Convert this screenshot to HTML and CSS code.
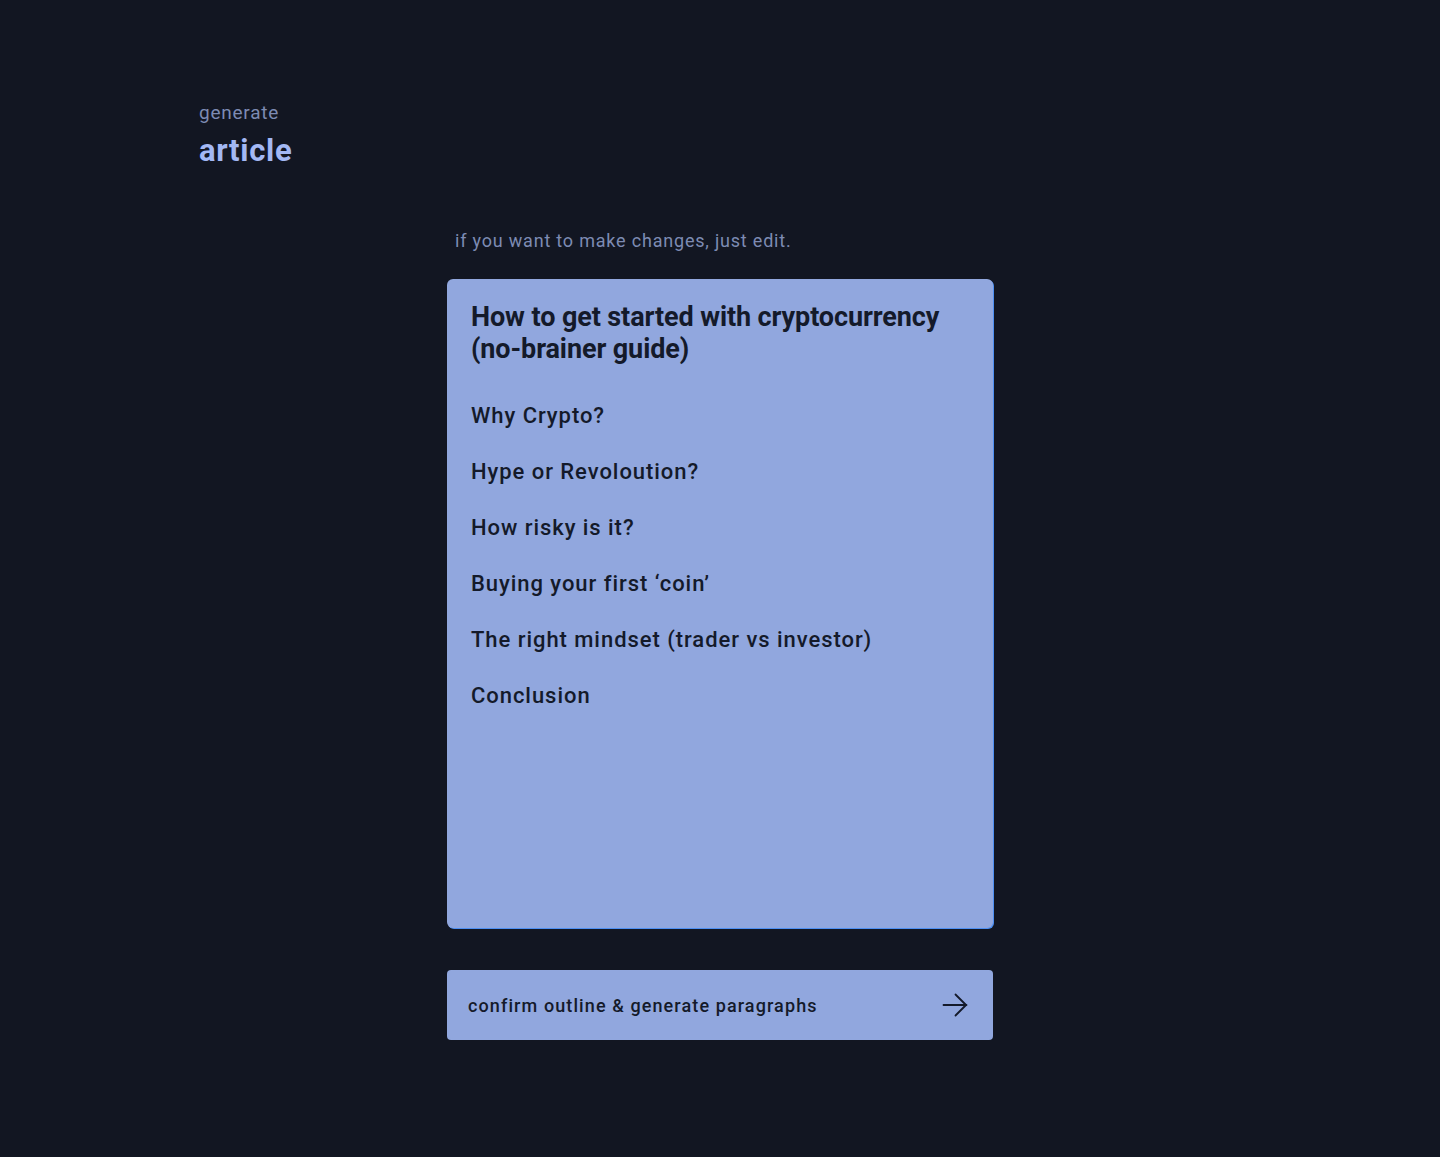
FILE: index.html
```html
<!DOCTYPE html>
<html lang="en">
<head>
<meta charset="utf-8">
<title>generate article</title>
<link rel="stylesheet" href="styles.css">
</head>
<body>
<div class="page">
  <header class="head">
    <div class="kicker">generate</div>
    <h1 class="title">article</h1>
  </header>
  <main class="main">
    <p class="hint">if you want to make changes, just edit.</p>
    <div class="outline" contenteditable="true">
      <h2 class="outline-title">How to get started with cryptocurrency (no-brainer guide)</h2>
      <p class="item">Why Crypto?</p>
      <p class="item">Hype or Revoloution?</p>
      <p class="item">How risky is it?</p>
      <p class="item">Buying your first ‘coin’</p>
      <p class="item">The right mindset (trader vs investor)</p>
      <p class="item">Conclusion</p>
    </div>
    <button class="confirm" type="button">
      <span>confirm outline &amp; generate paragraphs</span>
      <svg class="arrow" width="26" height="24" viewBox="0 0 26 24" fill="none" stroke="#141a2a" stroke-width="1.8" stroke-linecap="round" stroke-linejoin="round"><path d="M1.5 12h23M13.5 1.5L24 12 13.5 22.5"/></svg>
    </button>
  </main>
</div>
</body>
</html>
```

FILE: styles.css
```css
* { box-sizing: border-box; }
html, body { margin: 0; padding: 0; }
body {
  background: #121622;
  font-family: "Roboto", "Noto Sans", sans-serif;
  min-height: 1157px;
}
.page { padding: 100px 0 0 199px; }
.kicker {
  color: #7d8bb3;
  font-size: 19px;
  line-height: 26px;
  letter-spacing: 0.75px;
}
.title {
  margin: 5px 0 0;
  color: #a3b8f4;
  font-size: 31px;
  line-height: 40px;
  font-weight: 700;
  letter-spacing: 0.7px;
}
.main {
  width: 546px;
  margin: 58px 0 0 248px;
}
.hint {
  margin: 0 0 26px 8px;
  color: #7d8bb3;
  font-size: 18px;
  line-height: 24px;
  letter-spacing: 0.8px;
}
.outline {
  height: 649px;
  background: #91a7de;
  border-radius: 6px;
  box-shadow: 1px 1px 0 #4d8ff2;
  padding: 22px 24px;
  color: #141a2a;
  outline: none;
}
.outline-title {
  margin: 0 0 35px;
  font-size: 27px;
  line-height: 32px;
  font-weight: 700;
  letter-spacing: -0.1px;
}
.item {
  margin: 0 0 24px;
  font-size: 22px;
  line-height: 32px;
  font-weight: 500;
  letter-spacing: 0.95px;
}
.confirm {
  margin-top: 42px;
  width: 546px;
  height: 70px;
  background: #91a7de;
  border: 0;
  border-radius: 4px;
  padding: 0 25px 0 21px;
  display: flex;
  align-items: center;
  justify-content: space-between;
  font-family: inherit;
  font-size: 18px;
  font-weight: 500;
  letter-spacing: 1.1px;
  color: #141a2a;
}
.arrow { display: block; }
```
